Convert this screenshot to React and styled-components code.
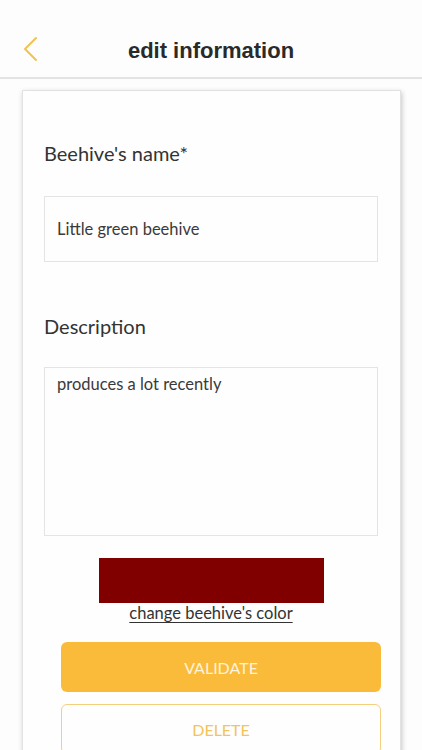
import React from "react";
import styled, { createGlobalStyle } from "styled-components";

const GlobalStyle = createGlobalStyle`
  html, body {
    margin: 0;
    padding: 0;
    background: #fdfdfd;
    font-family: "Lato", "Open Sans", sans-serif;
    overflow: hidden;
  }
`;

const Screen = styled.div`
  width: 422px;
  height: 750px;
  overflow: hidden;
  background: #fdfdfd;
`;

const StatusBar = styled.div`
  height: 20px;
`;

const Header = styled.div`
  height: 57px;
  display: flex;
  align-items: center;
  justify-content: center;
  position: relative;
  border-bottom: 2px solid #e3e3e3;
`;

const BackButton = styled.div`
  position: absolute;
  left: 22px;
  top: 16px;
  width: 18px;
  height: 26px;
  display: flex;
`;

const Title = styled.h1`
  margin: 0;
  font-family: "Liberation Sans", Arial, sans-serif;
  font-weight: 700;
  font-size: 22px;
  color: #2a2a2a;
  padding-top: 4px;
`;

const Card = styled.div`
  margin: 11px 21px 0 22px;
  background: #fefefe;
  border: 1px solid #e2e2e2;
  box-shadow: 1px 2px 5px rgba(0, 0, 0, 0.22);
  padding: 50px 22px 40px 21px;
  display: flex;
  flex-direction: column;
`;

const Label = styled.div`
  font-size: 20px;
  line-height: 24px;
  color: #333;
  margin-top: ${(p) => p.$top || 0}px;
`;

const Field = styled.div`
  margin-top: ${(p) => p.$top}px;
  height: ${(p) => p.$height}px;
  border: 1px solid #e4e4e4;
  box-sizing: border-box;
  display: flex;
  align-items: ${(p) => (p.$multiline ? "flex-start" : "center")};
  padding: ${(p) => (p.$multiline ? "6px 12px" : "0 12px")};
  font-size: 16.5px;
  color: #3a3a3a;
`;

const ColorBlock = styled.div`
  align-self: center;
  margin-top: 22px;
  width: 225px;
  height: 45px;
  background: #800000;
`;

const ColorLink = styled.a`
  align-self: center;
  margin-top: 1px;
  font-size: 16.5px;
  line-height: 19px;
  color: #333;
  text-decoration: underline;
  text-underline-offset: 3px;
`;

const Button = styled.div`
  margin-top: ${(p) => p.$top}px;
  margin-left: 17px;
  width: 320px;
  height: 50px;
  box-sizing: border-box;
  border-radius: 6px;
  display: flex;
  align-items: center;
  justify-content: center;
  font-size: 16px;
  background: ${(p) => (p.$outline ? "#fefefe" : "#fbbb3a")};
  border: ${(p) => (p.$outline ? "1.5px solid #f6cf7e" : "none")};
  color: ${(p) => (p.$outline ? "#f3c458" : "#fdf3dc")};
`;

const ChevronLeft = () => (
  <svg width="18" height="26" viewBox="0 0 18 26" fill="none">
    <path
      d="M14 2 L3 13 L14 24"
      stroke="#f0c250"
      strokeWidth="2"
      strokeLinecap="round"
      strokeLinejoin="round"
    />
  </svg>
);

export default function App() {
  return (
    <Screen>
      <GlobalStyle />
      <StatusBar />
      <Header>
        <BackButton>
          <ChevronLeft />
        </BackButton>
        <Title>edit information</Title>
      </Header>
      <Card>
        <Label>Beehive's name*</Label>
        <Field $top={31} $height={66}>
          Little green beehive
        </Field>
        <Label $top={52}>Description</Label>
        <Field $top={29} $height={169} $multiline>
          produces a lot recently
        </Field>
        <ColorBlock />
        <ColorLink>change beehive's color</ColorLink>
        <Button $top={19}>VALIDATE</Button>
        <Button $top={12} $outline>
          DELETE
        </Button>
      </Card>
    </Screen>
  );
}
